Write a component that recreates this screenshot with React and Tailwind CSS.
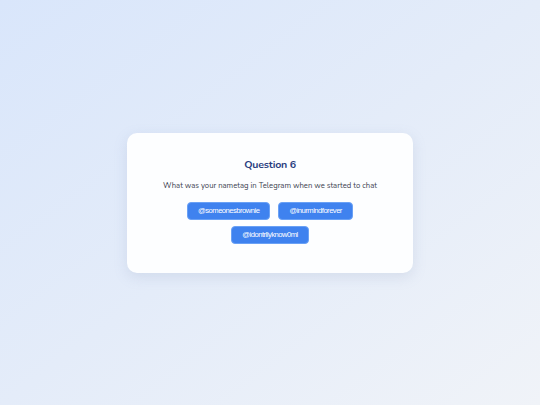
export default function App() {
  const rows = [["@someonesbrownie", "@inurmindforever"], ["@idontrllyknow0ml"]];
  return (
    <div
      className="w-[540px] h-[405px] flex items-center justify-center bg-gradient-to-br from-[#d9e6fb] via-[#e4ecf9] to-[#f0f3f8]"
      style={{ fontFamily: "Nunito, Lato, 'Noto Sans', sans-serif" }}
    >
      <div className="w-[286px] h-[140px] rounded-[10px] bg-[#fdfeff] shadow-[0_4px_14px_rgba(120,140,180,0.18)] flex flex-col items-center pt-[24px]">
        <h1 className="text-[10.6px] tracking-[-0.2px] leading-4 font-bold text-[#2a3d80]">Question 6</h1>
        <p className="mt-[6px] text-[7.7px] leading-[13px] text-[#3c4250]">
          What was your nametag in Telegram when we started to chat
        </p>
        <div className="mt-[10px] flex flex-col items-center gap-[6px]">
          {rows.map((row, i) => (
            <div key={i} className="flex gap-[8px]">
              {row.map((name) => (
                <button
                  key={name}
                  className="h-[18px] px-[10px] rounded-[4px] bg-[#3f82ef] border border-[#6aa1f5] text-white text-[7.6px] tracking-[-0.5px] leading-none"
                  style={{ fontFamily: "'Liberation Sans', Arial, sans-serif" }}
                >
                  {name}
                </button>
              ))}
            </div>
          ))}
        </div>
      </div>
    </div>
  );
}
